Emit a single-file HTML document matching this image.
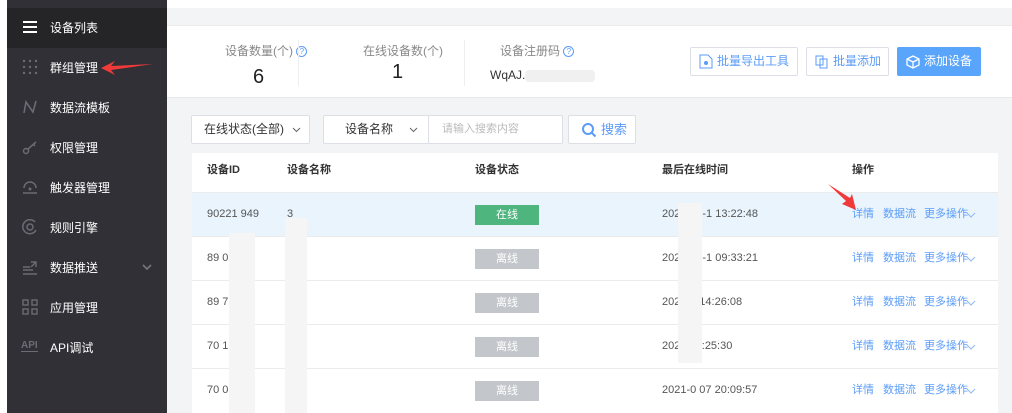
<!DOCTYPE html>
<html><head><meta charset="utf-8"><style>
*{box-sizing:border-box;margin:0;padding:0}
body{width:1012px;height:413px;overflow:hidden;background:#f3f4f6;font-family:"Liberation Sans","Noto Sans CJK SC",sans-serif;position:relative;font-size:12px;color:#333}
.abs{position:absolute}
.left{left:0;top:0;width:7px;height:413px;background:#fff}
.side{left:7px;top:0;width:160px;height:413px;background:#313037}
.side .top{position:absolute;left:0;top:8px;width:160px;height:40px;background:#252528}
.item{position:absolute;left:43px;color:#fff;font-size:12px;line-height:16px}
.ic{position:absolute;left:15px;width:16px;height:16px}
.tophead{left:167px;top:0;width:845px;height:8px;background:#fff}
.stats{left:167px;top:25px;width:845px;height:73px;background:#fff;border-bottom:1px solid #e8e8e8;border-top:1px solid #ebebeb}
.lbl{color:#888;font-size:12px}
.q{display:inline-block;width:11px;height:11px;border:1px solid #5b9cf8;border-radius:50%;color:#5b9cf8;font-size:8px;line-height:9px;text-align:center;vertical-align:1px}
.btn{position:absolute;top:47px;height:29px;border:1px solid #dcdfe6;border-radius:2px;background:#fff;color:#5b9cf8;font-size:12px;line-height:27px;padding-left:26px;white-space:nowrap}
.sel{position:absolute;top:115px;height:29px;border:1px solid #dcdfe6;background:#fff;border-radius:2px;font-size:12px;line-height:27px;color:#333}
.tbl{left:192px;top:153px;width:806px;height:260px;background:#fff}
.row{position:absolute;left:0;width:806px;height:44px;border-top:1px solid #ebebeb}
.c{position:absolute;top:0;line-height:43px;font-size:11px;color:#555}
.st{position:absolute;left:283px;top:12px;width:64px;height:20px;color:#fff;font-size:11px;line-height:20px;text-align:center}
.op{position:absolute;top:0;line-height:43px;color:#5b9cf8;font-size:11px}
.chev{position:absolute;left:774px;top:19px}
.blur{position:absolute;background:#f5f5f5}
</style></head><body>
<div class="abs left"></div>
<div class="abs side">
 <div class="top"></div>
 <svg class="ic" style="top:19px" viewBox="0 0 16 16"><path d="M1 3h14M1 8h14M1 13h14" stroke="#fff" stroke-width="2"/></svg>
 <div class="item" style="top:20px">设备列表</div>
 <svg class="ic" style="top:59px" viewBox="0 0 16 16" fill="#6b6b75"><circle cx="2" cy="2" r="1.2"/><circle cx="8" cy="2" r="1.2"/><circle cx="14" cy="2" r="1.2"/><circle cx="2" cy="8" r="1.2"/><circle cx="8" cy="8" r="1.2"/><circle cx="14" cy="8" r="1.2"/><circle cx="2" cy="14" r="1.2"/><circle cx="8" cy="14" r="1.2"/><circle cx="14" cy="14" r="1.2"/></svg>
 <div class="item" style="top:60px">群组管理</div>
 <svg class="abs" style="left:94px;top:60px" width="52" height="16" viewBox="0 0 52 16"><path d="M0 8 L14 1 L10 6 L52 4 L10 10 L14 15Z" fill="#f03a3a"/></svg>
 <svg class="ic" style="top:99px" viewBox="0 0 16 16"><path d="M2 14 L4 3 L11 13 L14 2" stroke="#6b6b75" stroke-width="1.6" fill="none"/></svg>
 <div class="item" style="top:100px">数据流模板</div>
 <svg class="ic" style="top:139px" viewBox="0 0 16 16"><circle cx="4" cy="12" r="2.5" stroke="#6b6b75" stroke-width="1.5" fill="none"/><path d="M6 10 L14 3 M11 5 l2 2" stroke="#6b6b75" stroke-width="1.5"/></svg>
 <div class="item" style="top:140px">权限管理</div>
 <svg class="ic" style="top:179px" viewBox="0 0 16 16"><path d="M2 9 A6 6 0 0 1 14 9 M1 14 H15" stroke="#6b6b75" stroke-width="1.5" fill="none"/><circle cx="8" cy="10" r="1.5" fill="#6b6b75"/></svg>
 <div class="item" style="top:180px">触发器管理</div>
 <svg class="ic" style="top:219px" viewBox="0 0 16 16"><path d="M13 3 A7 7 0 1 0 14 11" stroke="#6b6b75" stroke-width="1.5" fill="none"/><circle cx="8" cy="8" r="3" stroke="#6b6b75" stroke-width="1.5" fill="none"/></svg>
 <div class="item" style="top:220px">规则引擎</div>
 <svg class="ic" style="top:259px" viewBox="0 0 16 16"><path d="M1 8h7M1 11h10M1 15h14M9 3h5v5M14 3 L9 8" stroke="#6b6b75" stroke-width="1.4" fill="none"/></svg>
 <div class="item" style="top:260px">数据推送</div>
 <svg class="abs" style="left:135px;top:263px" width="10" height="8" viewBox="0 0 10 8"><path d="M1 2 L5 6 L9 2" stroke="#777" stroke-width="1.6" fill="none"/></svg>
 <svg class="ic" style="top:299px" viewBox="0 0 16 16" fill="none" stroke="#6b6b75" stroke-width="1.4"><rect x="1" y="1" width="5" height="5"/><rect x="10" y="1" width="5" height="5"/><rect x="1" y="10" width="5" height="5"/><rect x="10" y="10" width="5" height="5"/></svg>
 <div class="item" style="top:300px">应用管理</div>
 <div class="abs" style="left:14px;top:340px;color:#6b6b75;font-size:10px;font-weight:bold;border-bottom:1.5px solid #6b6b75;line-height:11px">API</div>
 <div class="item" style="top:340px">API调试</div>
</div>
<div class="abs tophead"></div>
<div class="abs stats">
 <div class="abs lbl" style="left:58px;top:16px">设备数量(个) <span class="q">?</span></div>
 <div class="abs" style="left:86px;top:40px;font-size:20px;color:#222">6</div>
 <div class="abs" style="left:131px;top:14px;width:1px;height:46px;background:#eee"></div>
 <div class="abs lbl" style="left:196px;top:16px">在线设备数(个)</div>
 <div class="abs" style="left:225px;top:35px;font-size:20px;color:#222">1</div>
 <div class="abs" style="left:297px;top:14px;width:1px;height:46px;background:#eee"></div>
 <div class="abs lbl" style="left:333px;top:16px">设备注册码 <span class="q">?</span></div>
 <div class="abs" style="left:323px;top:42px;font-size:12px;color:#333">WqAJ.</div>
 <div class="abs" style="left:358px;top:44px;width:70px;height:12px;background:#f0f0f0;border-radius:4px"></div>
</div>
<div class="btn" style="left:690px;width:108px">批量导出工具<svg class="abs" style="left:8px;top:6px" width="14" height="15" viewBox="0 0 14 15"><path d="M1 1h8l4 4v9H1z" stroke="#5b9cf8" fill="none"/><circle cx="7" cy="9" r="2" fill="#5b9cf8"/></svg></div>
<div class="btn" style="left:806px;width:83px">批量添加<svg class="abs" style="left:8px;top:7px" width="14" height="14" viewBox="0 0 14 14"><rect x="1" y="1" width="7" height="9" stroke="#5b9cf8" fill="none"/><rect x="5" y="4" width="7" height="9" stroke="#5b9cf8" fill="none"/></svg></div>
<div class="btn" style="left:897px;width:84px;background:#5aa5fc;border-color:#5aa5fc;color:#fff">添加设备<svg class="abs" style="left:8px;top:7px" width="14" height="14" viewBox="0 0 14 14"><path d="M7 1 L13 4 V10 L7 13 L1 10 V4Z M1 4 L7 7 L13 4 M7 7 V13" stroke="#fff" stroke-width="1.3" fill="none"/></svg></div>
<div class="sel" style="left:191px;width:119px;padding-left:12px">在线状态(全部)<svg class="abs" style="left:100px;top:11px" width="9" height="6" viewBox="0 0 9 6"><path d="M1 1 L4.5 4.5 L8 1" stroke="#666" fill="none"/></svg></div>
<div class="sel" style="left:323px;width:106px;padding-left:21px;border-right:none">设备名称<svg class="abs" style="left:85px;top:11px" width="9" height="6" viewBox="0 0 9 6"><path d="M1 1 L4.5 4.5 L8 1" stroke="#666" fill="none"/></svg></div>
<div class="sel" style="left:428px;width:135px;padding-left:13px;color:#bbb;font-size:11px">请输入搜索内容</div>
<div class="sel" style="left:568px;width:68px;padding-left:32px;color:#5b9cf8;font-size:13px">搜索<svg class="abs" style="left:12px;top:6px" width="16" height="16" viewBox="0 0 16 16"><circle cx="7" cy="7" r="5" stroke="#5b9cf8" stroke-width="2" fill="none"/><path d="M11 11 L14.5 14.5" stroke="#5b9cf8" stroke-width="2"/></svg></div>
<div class="abs tbl">
 <div class="c" style="left:15px;top:-2px;color:#333;font-weight:bold;line-height:39px">设备ID</div>
 <div class="c" style="left:95px;top:-2px;color:#333;font-weight:bold;line-height:39px">设备名称</div>
 <div class="c" style="left:283px;top:-2px;color:#333;font-weight:bold;line-height:39px">设备状态</div>
 <div class="c" style="left:470px;top:-2px;color:#333;font-weight:bold;line-height:39px">最后在线时间</div>
 <div class="c" style="left:660px;top:-2px;color:#333;font-weight:bold;line-height:39px">操作</div>
 <div class="row" style="top:39px;background:#e9f4fd">
  <div class="c" style="left:15px">90221 949</div><div class="c" style="left:95px">3</div>
  <div class="st" style="background:#4fb57f">在线</div>
  <div class="c" style="left:470px">2022-03-1 13:22:48</div>
  <div class="op" style="left:660px">详情</div><div class="op" style="left:691px">数据流</div><div class="op" style="left:732px">更多操作</div>
  <svg class="chev" width="10" height="6" viewBox="0 0 10 6"><path d="M1 1 L5 5 L9 1" stroke="#8fb8f0" fill="none"/></svg>
 </div>
 <div class="row" style="top:83px">
  <div class="c" style="left:15px">89 07</div>
  <div class="st" style="background:#c3c7cb">离线</div>
  <div class="c" style="left:470px">2022-03-1 09:33:21</div>
  <div class="op" style="left:660px">详情</div><div class="op" style="left:691px">数据流</div><div class="op" style="left:732px">更多操作</div>
  <svg class="chev" width="10" height="6" viewBox="0 0 10 6"><path d="M1 1 L5 5 L9 1" stroke="#8fb8f0" fill="none"/></svg>
 </div>
 <div class="row" style="top:127px">
  <div class="c" style="left:15px">89 75</div>
  <div class="st" style="background:#c3c7cb">离线</div>
  <div class="c" style="left:470px">2022-0 14:26:08</div>
  <div class="op" style="left:660px">详情</div><div class="op" style="left:691px">数据流</div><div class="op" style="left:732px">更多操作</div>
  <svg class="chev" width="10" height="6" viewBox="0 0 10 6"><path d="M1 1 L5 5 L9 1" stroke="#8fb8f0" fill="none"/></svg>
 </div>
 <div class="row" style="top:171px">
  <div class="c" style="left:15px">70 1 0.</div><div class="c" style="left:105px">a</div>
  <div class="st" style="background:#c3c7cb">离线</div>
  <div class="c" style="left:470px">2022 13:25:30</div>
  <div class="op" style="left:660px">详情</div><div class="op" style="left:691px">数据流</div><div class="op" style="left:732px">更多操作</div>
  <svg class="chev" width="10" height="6" viewBox="0 0 10 6"><path d="M1 1 L5 5 L9 1" stroke="#8fb8f0" fill="none"/></svg>
 </div>
 <div class="row" style="top:215px">
  <div class="c" style="left:15px">70 0 32</div><div class="c" style="left:95px">z c</div>
  <div class="st" style="background:#c3c7cb">离线</div>
  <div class="c" style="left:470px">2021-0 07 20:09:57</div>
  <div class="op" style="left:660px">详情</div><div class="op" style="left:691px">数据流</div><div class="op" style="left:732px">更多操作</div>
  <svg class="chev" width="10" height="6" viewBox="0 0 10 6"><path d="M1 1 L5 5 L9 1" stroke="#8fb8f0" fill="none"/></svg>
 </div>
 <div class="blur" style="left:37px;top:80px;width:26px;height:180px"></div>
 <div class="blur" style="left:93px;top:65px;width:22px;height:195px"></div>
 <div class="blur" style="left:486px;top:50px;width:24px;height:160px"></div>
</div>
<svg class="abs" style="left:828px;top:184px" width="30" height="28" viewBox="0 0 30 28"><path d="M0 0 L22 14 L24 10 L28 26 L14 20 L18 17 Z" fill="#f03a3a"/></svg>
</body></html>
